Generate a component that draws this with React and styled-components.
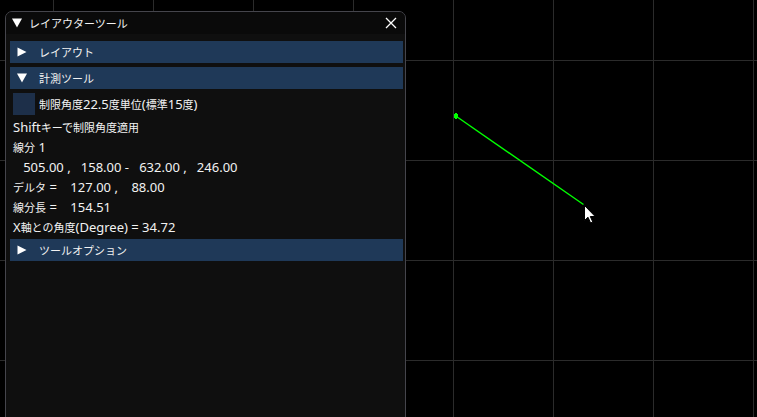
import React from 'react'
import styled, { createGlobalStyle } from 'styled-components'

const GlobalStyle = createGlobalStyle`
  html, body {
    margin: 0;
    padding: 0;
    background: #000;
  }
  body {
    font-family: "Noto Sans", "Noto Sans CJK JP", sans-serif;
  }
`

const Desktop = styled.div`
  position: relative;
  width: 757px;
  height: 417px;
  overflow: hidden;
  background: #000;
`

const CanvasArt = styled.svg`
  position: absolute;
  left: 0;
  top: 0;
`

const ToolWindow = styled.div`
  position: absolute;
  left: 5px;
  top: 11px;
  width: 399px;
  height: 420px;
  border: 1px solid #45454c;
  border-radius: 7px 7px 0 0;
  background: #0f0f0f;
  color: #f2f2f2;
  font-size: 13px;
  line-height: 16px;
  overflow: hidden;
`

const TitleBar = styled.div`
  display: flex;
  align-items: center;
  height: 22px;
  padding: 0 6px 0 6px;
  background: #0a0a0a;
`

const TitleText = styled.span`
  flex: 1;
  margin-left: 7px;
`

const CloseButton = styled.button`
  display: flex;
  align-items: center;
  justify-content: center;
  width: 16px;
  height: 16px;
  padding: 0;
  border: 0;
  background: transparent;
  cursor: pointer;
`

const Body = styled.div`
  display: flex;
  flex-direction: column;
  gap: 4px;
  padding: 7px 2px 0 4px;
`

const Header = styled.div`
  display: flex;
  align-items: center;
  height: 22px;
  padding-left: 7px;
  background: #1f3958;
`

const HeaderLabel = styled.span`
  margin-left: ${p => p.$gap}px;
`

const CheckRow = styled.label`
  display: flex;
  align-items: center;
  height: 22px;
  padding-left: 3px;
`

const CheckBox = styled.span`
  width: 22px;
  height: 22px;
  background: #1d2f49;
  margin-right: 4px;
`

const TextRow = styled.div`
  height: 16px;
  padding-left: 3px;
  white-space: pre;
`

// the UI font draws kana/kanji a little smaller than its latin glyphs
const Ja = styled.span`
  font-family: "Noto Sans CJK JP", sans-serif;
  font-size: 11px;
`

function Mixed ({ children }) {
  const parts = String(children).split(/([\u3000-\u30ff\u4e00-\u9fff\uff00-\uffef]+)/)
  return parts.map((part, i) =>
    i % 2 === 1 ? <Ja key={i}>{part}</Ja> : part
  )
}

function Arrow ({ open }) {
  return open
    ? (
      <svg width='10' height='10' viewBox='0 0 10 10'>
        <polygon points='0,0.5 10,0.5 5,9.5' fill='#fff' />
      </svg>
      )
    : (
      <svg width='10' height='10' viewBox='0 0 10 10'>
        <polygon points='0.5,0.5 9.5,5 0.5,9.5' fill='#fff' />
      </svg>
      )
}

function CollapsingHeader ({ open, children }) {
  return (
    <Header>
      <Arrow open={open} />
      <HeaderLabel $gap={12}><Mixed>{children}</Mixed></HeaderLabel>
    </Header>
  )
}

function Grid () {
  const xs = [53, 153, 253, 353, 453, 553, 653, 753]
  const ys = [60, 160, 260, 360]
  return (
    <g stroke='#2b2b2b' strokeWidth='1'>
      {xs.map(x => <line key={'v' + x} x1={x + 0.5} y1='0' x2={x + 0.5} y2='417' />)}
      {ys.map(y => <line key={'h' + y} x1='0' y1={y + 0.5} x2='757' y2={y + 0.5} />)}
    </g>
  )
}

function Cursor ({ x, y }) {
  return (
    <path
      transform={`translate(${x} ${y})`}
      d='M0.5 0.5 L0.5 15.5 L4 12.2 L6.6 18 L8.8 17 L6.3 11.5 L11.2 11.5 Z'
      fill='#fff'
      stroke='#000'
      strokeWidth='1'
    />
  )
}

export default function App () {
  return (
    <>
      <GlobalStyle />
      <Desktop>
        <CanvasArt width='757' height='417'>
          <Grid />
          <line x1='456.5' y1='116.5' x2='583.5' y2='204.5' stroke='#00ff00' strokeWidth='1.4' />
          <rect x='454' y='114' width='4' height='4' fill='#00ff00' />
          <rect x='455' y='113' width='2' height='6' fill='#00ff00' />
          <Cursor x={584} y={205} />
        </CanvasArt>

        <ToolWindow>
          <TitleBar>
            <Arrow open />
            <TitleText><Mixed>レイアウターツール</Mixed></TitleText>
            <CloseButton aria-label='close'>
              <svg width='12' height='12' viewBox='0 0 12 12'>
                <path d='M1 1 L11 11 M11 1 L1 11' stroke='#fff' strokeWidth='1.3' />
              </svg>
            </CloseButton>
          </TitleBar>
          <Body>
            <CollapsingHeader>レイアウト</CollapsingHeader>
            <CollapsingHeader open>計測ツール</CollapsingHeader>
            <CheckRow>
              <CheckBox />
              <span><Mixed>制限角度22.5度単位(標準15度)</Mixed></span>
            </CheckRow>
            <TextRow><Mixed>Shiftキーで制限角度適用</Mixed></TextRow>
            <TextRow><Mixed>線分 1</Mixed></TextRow>
            <TextRow>{'   505.00 ,   158.00 -   632.00 ,   246.00'}</TextRow>
            <TextRow><Mixed>{'デルタ =    127.00 ,    88.00'}</Mixed></TextRow>
            <TextRow><Mixed>{'線分長 =    154.51'}</Mixed></TextRow>
            <TextRow><Mixed>X軸との角度(Degree) = 34.72</Mixed></TextRow>
            <CollapsingHeader>ツールオプション</CollapsingHeader>
          </Body>
        </ToolWindow>
      </Desktop>
    </>
  )
}
